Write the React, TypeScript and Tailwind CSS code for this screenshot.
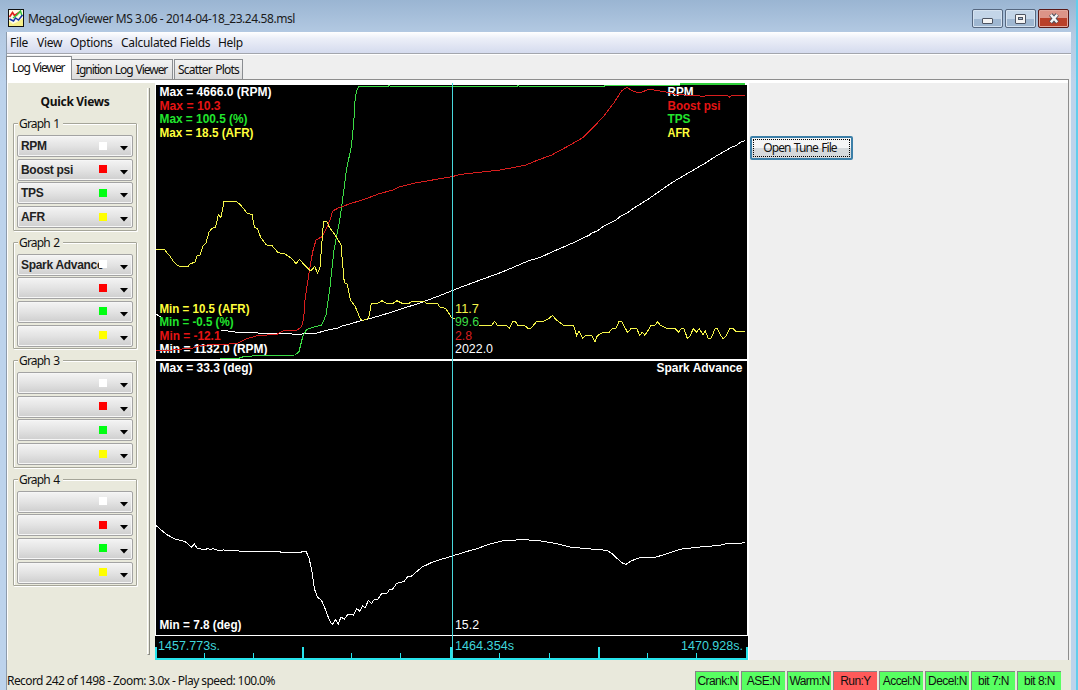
import clsx from 'clsx';

type Point = [number, number];

interface GraphGroup {
  title: string;
  fields: string[];
}

const MENU_ITEMS = [
  { label: 'File', className: 'w-[27px]' },
  { label: 'View', className: 'w-[33px]' },
  { label: 'Options', className: 'w-[51px]' },
  { label: 'Calculated Fields', className: 'w-[97px]' },
  { label: 'Help', className: 'w-[30px]' },
];

const GROUPS: GraphGroup[] = [
  { title: 'Graph 1', fields: ['RPM', 'Boost psi', 'TPS', 'AFR'] },
  { title: 'Graph 2', fields: ['Spark Advance', '', '', ''] },
  { title: 'Graph 3', fields: ['', '', '', ''] },
  { title: 'Graph 4', fields: ['', '', '', ''] },
];

const SWATCHES = ['bg-white', 'bg-[#ff0000]', 'bg-[#00ff12]', 'bg-[#ffff00]'];

const FLAGS = [
  { label: 'Crank:N', on: false },
  { label: 'ASE:N', on: false },
  { label: 'Warm:N', on: false },
  { label: 'Run:Y', on: true },
  { label: 'Accel:N', on: false },
  { label: 'Decel:N', on: false },
  { label: 'bit 7:N', on: false },
  { label: 'bit 8:N', on: false },
];

// Traces, in window coordinates (same space as the svg viewBox)
const RPM_HEAD: Point[] = [[156, 314], [159, 316], [161, 317]];

const RPM: Point[] = [
  [221, 330], [235, 332], [250, 332.7], [277, 333.7], [290, 333.7], [298, 334.7],
  [302, 334], [317, 333], [326, 330.5], [337, 328.3], [342, 326], [348, 324.5], [360, 321], [372, 318], [390, 312.7], [404, 308],
  [417, 304], [437, 296.7], [452, 290.7], [460, 287.5], [483, 279], [497, 274], [507, 270], [528, 261], [540, 257.5], [552, 252],
  [572, 243.3], [589, 235.3], [591, 233.5], [597, 231], [604, 226], [616, 220], [620, 216.7], [627, 213], [634, 208], [648, 199.3],
  [662, 189.5], [673, 182], [684, 175.5], [705, 163.3], [717, 155.5], [727, 150], [731, 147.5], [736, 145.5], [741, 142], [745, 140.5],
];

const BOOST: Point[] = [
  [156, 350.5], [172, 350], [193, 348], [200, 345.7], [210, 344.7], [237, 343.7], [245, 339.3], [257, 335.7], [277, 334.3], [283, 331],
  [297, 330], [301.7, 326.7], [303.7, 318.3], [305, 300], [309.7, 268.3], [312.7, 251.7], [316, 240], [322, 236.7], [327, 227], [330, 220],
  [332.7, 211], [338.3, 208], [350, 203.7], [365.3, 199], [378.3, 194], [392.7, 190], [400, 186.7], [416.7, 182.7], [436.7, 179.3], [452, 176.7],
  [460, 174.5], [473.3, 173], [500, 170], [525, 165.3], [538, 160], [551.7, 155], [568.3, 146], [582.7, 137.7], [593.3, 127.3], [603.3, 116.7],
  [614, 102.7], [621.7, 90.7], [626.7, 87.3], [633, 91], [639, 93], [649.3, 89.3], [666, 92], [676.7, 94.7], [699, 95.5], [702.7, 97],
  [706, 95.5], [727, 95.5], [729.5, 97], [732, 95.5], [745, 95.5],
];

const TPS: Point[] = [
  [220, 358.5], [237, 358.5], [245, 356.3], [270, 355.3], [295, 355], [299, 351.7], [302.7, 336.7], [306.7, 329.3], [314, 327], [321.7, 325],
  [326, 315], [330, 286.7], [334, 250], [339.7, 220], [341.7, 206], [346.7, 168.3], [351.3, 146.7], [353.7, 123.3], [355.3, 96.7], [357, 90],
  [359, 86.5], [388, 86.5], [389, 85.5], [391, 86.5], [517, 86.5], [518, 85.5], [520, 86.5], [604, 86.5], [605, 85.5], [680, 85.5],
];

const AFR: Point[] = [
  [156, 249.5], [164.5, 249.5], [167, 253], [170, 256], [173, 261], [177, 265], [180, 266.5], [188, 266.5], [190, 264], [195, 262],
  [197, 256], [200, 255], [203, 246], [206, 243], [209, 232], [211.7, 228.5], [215.7, 227], [218.3, 214.5], [221, 217.5], [224, 201.5],
  [236.5, 201.5], [240.5, 205], [247.5, 213.5], [252, 214.5], [254.5, 227], [257.5, 229], [260.7, 237.3], [266.5, 245], [272, 245.5], [278, 252.7],
  [284.5, 253.5], [291.5, 258.5], [296, 263.5], [299.5, 259.5], [305, 265.5], [309.5, 270], [311.5, 270], [314.7, 266.5], [317.5, 273], [320, 267.5],
  [323.5, 221.5], [326.7, 221.5], [329.5, 227.5], [335.5, 235.5], [341, 245], [344.3, 282.7], [347.3, 284], [350.3, 300], [355, 306], [360.5, 319.3],
  [363, 320.5], [368.5, 318.5], [371.3, 304], [378, 303], [382, 300.7], [385.7, 303], [393.5, 303], [397, 300.7], [401.5, 303], [409.5, 303],
  [412.7, 301], [423.5, 301], [426.5, 303.3], [437.5, 303.3], [440, 307.3], [445.5, 308.3], [451.7, 317.7], [454.5, 318.7],
];

const AFR_TAIL: Point[] = [
  [479, 325.5], [491.7, 325.5], [494.7, 321.3], [497.5, 325.5], [506.7, 325.5], [509.3, 328.5], [512.7, 321.5], [515.3, 321.5], [518, 325.5], [524.7, 325.5],
  [528, 328.5], [530.7, 328.5], [536.7, 321.5], [544, 321], [549.3, 318.3], [552.3, 315.5], [557.3, 320.7], [564, 325.5], [573.7, 325.7], [576.7, 335.7],
  [579, 331], [582.7, 338.3], [585.7, 335.3], [591.7, 335.3], [595, 342], [597.3, 335.7], [603.3, 332], [609.3, 332], [612, 329], [616, 328.3],
  [619, 321.5], [621.7, 321.7], [627.7, 332.7], [631, 328.5], [636.7, 328.5], [639.7, 335.3], [642.3, 332.3], [645, 335.3], [651, 325.5], [655, 325],
  [657.7, 321.7], [660, 325], [667, 328.5], [675.3, 328.5], [678.3, 332.3], [681.3, 328.5], [684, 328.7], [687.3, 338.3], [690.3, 335.7], [693.3, 328.5],
  [696.3, 332.3], [699.3, 328.5], [703, 335], [705.3, 331], [708.3, 338.3], [711.3, 338], [715, 328.7], [717.3, 328.5], [720.3, 335], [723.3, 338.7],
  [726.7, 335], [729.3, 329], [733.3, 328.5], [736, 331.7], [745, 331.7],
];

const SPARK: Point[] = [
  [156, 525.5], [160, 529], [167, 534.7], [175, 539], [185, 541.5], [191.7, 547.3], [194.3, 544], [197.3, 548.5], [205, 549.5], [208, 548.5],
  [210, 549.7], [213.3, 548.7], [219, 550.7], [223.3, 550], [243.3, 551.3], [280, 551.7], [281, 552.5], [301, 552.5], [302, 551.5], [306, 551.5],
  [309, 557.7], [312.3, 573.3], [314.3, 588.3], [317.3, 597.3], [321.3, 600], [324.3, 606.7], [329.3, 620], [332.3, 624.7], [335.7, 619.3], [338.3, 624],
  [341, 617], [344.3, 619.3], [348, 614], [353.3, 615], [356.7, 608.7], [360, 611.3], [362.7, 606], [365, 608], [368.3, 600.7], [371.7, 603.3],
  [374.3, 599.3], [378, 599.3], [381.7, 593.3], [387.3, 593], [389.3, 589.3], [392.7, 589], [396.7, 583.3], [404.3, 581.3], [407.7, 576.7], [411.7, 576],
  [421.7, 567.3], [433.3, 561.7], [450, 556.7], [465, 552], [476.7, 548.7], [490, 544], [501.7, 541], [520, 539.7], [536.7, 540.3], [556.7, 543.7],
  [570, 547], [586.7, 548.7], [606.7, 550.3], [611.7, 553.3], [621.7, 562.7], [626, 564.3], [631.7, 560.7], [640, 557.5], [653.3, 558], [670, 552.7],
  [680, 549.3], [696.7, 547.3], [720, 545.3], [726.7, 543.7], [738.3, 543.7], [745, 542.3],
];

function Trace({ points, color }: { points: Point[]; color: string }) {
  return (
    <polyline
      points={points.map((p) => p.join(',')).join(' ')}
      fill="none"
      stroke={color}
      strokeWidth={1}
      shapeRendering="crispEdges"
    />
  );
}

interface LabelProps {
  x: number;
  y: number;
  width: number;
  color: string;
  bold?: boolean;
  children: string;
}

function Label({ x, y, width, color, bold = false, children }: LabelProps) {
  return (
    <text
      x={x}
      y={y}
      fill={color}
      textLength={width}
      lengthAdjust="spacingAndGlyphs"
      className={clsx("font-['Liberation_Sans',sans-serif] text-[12px]", bold && 'font-bold')}
    >
      {children}
    </text>
  );
}

function LogChart() {
  return (
    <svg className="block h-[577px] w-[593px] shrink-0" viewBox="155 83 593 577">
      <rect x={155} y={85} width={593} height={575} fill="#000" />

      {/* Frame and dividers */}
      <g fill="#fff">
        <rect x={155} y={83} width={593} height={2} />
        <rect x={155} y={85} width={1} height={551} />
        <rect x={747} y={85} width={1} height={551} />
        <rect x={155} y={359} width={593} height={2} />
        <rect x={155} y={635} width={593} height={1} />
      </g>

      {/* Graph 1 labels */}
      <Label x={159.5} y={96} width={112} color="#fff" bold>Max = 4666.0 (RPM)</Label>
      <Label x={159.5} y={110} width={61} color="#e61414" bold>Max = 10.3</Label>
      <Label x={159.5} y={123} width={88} color="#22e62e" bold>Max = 100.5 (%)</Label>
      <Label x={159.5} y={137} width={94} color="#ffff3c" bold>Max = 18.5 (AFR)</Label>
      <Label x={667.5} y={96} width={26} color="#fff" bold>RPM</Label>
      <Label x={667.5} y={110} width={53} color="#e61414" bold>Boost psi</Label>
      <Label x={667.5} y={123} width={23} color="#22e62e" bold>TPS</Label>
      <Label x={667.5} y={137} width={22.5} color="#ffff3c" bold>AFR</Label>
      <Label x={159.5} y={313} width={90} color="#ffff3c" bold>Min = 10.5 (AFR)</Label>
      <Label x={159.5} y={326} width={74} color="#22e62e" bold>Min = -0.5 (%)</Label>
      <Label x={159.5} y={340} width={61} color="#e61414" bold>Min = -12.1</Label>
      <Label x={159.5} y={353} width={108} color="#fff" bold>Min = 1132.0 (RPM)</Label>

      {/* Graph 2 labels */}
      <Label x={159.5} y={372} width={93} color="#fff" bold>Max = 33.3 (deg)</Label>
      <Label x={656.5} y={372} width={86} color="#fff" bold>Spark Advance</Label>
      <Label x={159.5} y={629} width={82} color="#fff" bold>Min = 7.8 (deg)</Label>

      <Trace points={RPM_HEAD} color="#fff" />
      <Trace points={RPM} color="#fff" />
      <Trace points={TPS} color="#3bdc45" />
      <rect x={220} y={358} width={20} height={1} fill="#3bdc45" />
      <rect x={680} y={83} width={65} height={2} fill="#2fd03a" />
      <Trace points={BOOST} color="#d81e1e" />
      <Trace points={AFR} color="#f5f54a" />
      <Trace points={AFR_TAIL} color="#f5f54a" />
      <Trace points={SPARK} color="#fff" />

      {/* Playback cursor and its readouts */}
      <rect x={452} y={83} width={1} height={576} fill="#48d8dc" />
      <Label x={455} y={313} width={24} color="#f5f54a">11.7</Label>
      <Label x={455} y={326} width={24} color="#3bdc45">99.6</Label>
      <Label x={455} y={340} width={17} color="#d81e1e">2.8</Label>
      <Label x={455} y={353} width={38} color="#fff">2022.0</Label>
      <Label x={455} y={629} width={24} color="#fff">15.2</Label>

      {/* Time axis */}
      <g fill="#28e4ec">
        <rect x={155} y={658} width={593} height={2} />
        {[155, 302, 450, 598, 746].map((x) => (
          <rect key={x} x={x} y={647} width={2} height={11} />
        ))}
        {[204, 253, 351, 400, 499, 549, 647, 696].map((x) => (
          <rect key={x} x={x} y={653} width={1} height={5} />
        ))}
      </g>
      <Label x={158} y={650} width={62} color="#3fd6dc">1457.773s.</Label>
      <Label x={455} y={650} width={59} color="#3fd6dc">1464.354s</Label>
      <Label x={681} y={650} width={62} color="#3fd6dc">1470.928s.</Label>
    </svg>
  );
}

function FieldSelect({ value, swatch }: { value: string; swatch: string }) {
  return (
    <div className="relative flex h-[22px] items-center rounded-[2px] border border-[#a3a3a3] bg-linear-to-b from-[#f4f4f4] from-0% via-[#e3e3e3] via-50% to-[#cecece] px-[3px] shadow-[inset_0_0_0_1px_#f6f6f6]">
      <span className="whitespace-nowrap font-['Liberation_Sans',sans-serif] text-[12px] font-bold leading-[20px] tracking-[-0.3px] text-[#222]">
        {value}
      </span>
      <span className={clsx('absolute left-[81px] top-[5.5px] size-[8px]', swatch)} />
      <svg className="absolute left-[102px] top-[10px]" width="8" height="5" viewBox="0 0 8 5">
        <path d="M0 0h8L4 4.5z" fill="#000" />
      </svg>
    </div>
  );
}

function GroupBox({ group }: { group: GraphGroup }) {
  return (
    <fieldset className="relative h-[107.5px] rounded-[1px] border border-[#a5a599] px-[3px] pt-[11px] shadow-[inset_1px_1px_0_#fff,1px_1px_0_#fff]">
      <span className="absolute left-1 top-[-8px] bg-[#e9e9dc] pl-px pr-1 text-[12px] leading-[16px] tracking-[-0.8px] [word-spacing:1px]">
        {group.title}
      </span>
      <div className="flex flex-col gap-[1.7px]">
        {group.fields.map((field, i) => (
          <FieldSelect key={i} value={field} swatch={SWATCHES[i]} />
        ))}
      </div>
    </fieldset>
  );
}

function QuickViews() {
  return (
    <aside className="flex w-[147px] shrink-0 bg-[#e9e9dc]">
      <div className="w-[139px] pl-[5px] pr-[10px]">
        <h2 className="pt-[10px] text-center text-[12px] font-bold leading-[17px] tracking-[-0.3px]">Quick Views</h2>
        <div className="mt-[13px] flex flex-col gap-[11px]">
          {GROUPS.map((group) => (
            <GroupBox key={group.title} group={group} />
          ))}
        </div>
      </div>
      <div className="mt-[5px] h-[567px] w-[3px] border-b border-l border-r border-b-[#8d8d85] border-l-white border-r-[#8d8d85]" />
    </aside>
  );
}

function AppIcon() {
  return (
    <svg width="16" height="18" viewBox="0 0 16 18">
      <rect x="0.5" y="0.5" width="15" height="17" fill="#fffce6" stroke="#111" />
      <path d="M1 12l4 3 4-2 6-4v8H1z" fill="#f7f08a" />
      <path d="M1.5 8l3-4.5 2 3 3-2 3-2" fill="none" stroke="#e02020" strokeWidth="1.7" />
      <path d="M5 9l4-3 3.5-4L14 7" fill="none" stroke="#32c83c" strokeWidth="1.4" />
      <path d="M1.5 10l4 2 2-3 3 2 4-5" fill="none" stroke="#1937a8" strokeWidth="1.5" />
    </svg>
  );
}

function TitleBar() {
  return (
    <header className="flex h-[32px] items-start pl-2 pr-[7px]">
      <div className="mt-[9px]">
        <AppIcon />
      </div>
      <h1 className="ml-1 mt-[10px] flex-1 whitespace-nowrap text-[12px] leading-[18px] tracking-[-0.43px] text-[#1b1b1b]">
        MegaLogViewer MS 3.06 - 2014-04-18_23.24.58.msl
      </h1>
      <div className="mt-[9px] flex gap-[2px]">
        <button className="flex h-[19px] w-[31px] items-end justify-center rounded-[2px] border border-[#56677f] bg-linear-to-b from-[#c3d5e8] from-50% to-[#9fb7d1] to-50% pb-[3px] shadow-[inset_0_0_0_1px_#d5e2f0]">
          <span className="h-[6px] w-[11px] rounded-[1px] border border-[#4c5361] bg-[#f4f4f4]" />
        </button>
        <button className="flex h-[19px] w-[31px] items-center justify-center rounded-[2px] border border-[#56677f] bg-linear-to-b from-[#c3d5e8] from-50% to-[#9fb7d1] to-50% shadow-[inset_0_0_0_1px_#d5e2f0]">
          <span className="flex h-[10px] w-[11px] items-center justify-center rounded-[1px] border border-[#4c5361] bg-[#f4f4f4]">
            <span className="h-[3px] w-[5px] border border-[#4c5361] bg-[#a9bdd4]" />
          </span>
        </button>
        <button className="flex h-[19px] w-[31px] items-center justify-center rounded-[2px] border border-[#5a1a18] bg-linear-to-b from-[#dc9488] from-45% to-[#b9402a] to-45% shadow-[inset_0_0_0_1px_#e2a79c]">
          <svg width="12" height="11" viewBox="0 0 12 11">
            <path d="M2.8 1.5l6.4 8M9.2 1.5L2.8 9.5" stroke="#4a4f5c" strokeWidth="4.4" />
            <path d="M2.8 1.8l6.4 7.4M9.2 1.8L2.8 9.2" stroke="#f6f6f6" strokeWidth="2.5" />
          </svg>
        </button>
      </div>
    </header>
  );
}

function TabStrip() {
  return (
    <nav className="-ml-px flex h-[24px] items-end whitespace-nowrap text-[12px]">
      <div className="relative z-10 -mb-px h-[24px] w-[66px] border-l border-r border-t border-[#8a8d91] bg-white pl-[5px] leading-[22px] tracking-[-1.05px] [word-spacing:1px]">
        Log Viewer
      </div>
      <div className="h-[20px] w-[101px] border-r border-t border-[#8a8d91] bg-linear-to-b from-[#f3f3f3] to-[#dcdcdc] pl-1 leading-[20px] tracking-[-1.05px] [word-spacing:1px]">
        Ignition Log Viewer
      </div>
      <div className="ml-px h-[20px] w-[69px] border-l border-r border-t border-[#8a8d91] bg-linear-to-b from-[#f3f3f3] to-[#dcdcdc] pl-[3px] leading-[20px] tracking-[-0.8px] [word-spacing:1px]">
        Scatter Plots
      </div>
    </nav>
  );
}

function StatusBar() {
  return (
    <footer className="flex h-[30px] items-end justify-between bg-[#e9e9dc] pr-[10px]">
      <p className="whitespace-nowrap text-[12px] leading-[19px] tracking-[-0.58px]">
        Record 242 of 1498 - Zoom: 3.0x - Play speed: 100.0%
      </p>
      <div className="flex gap-[2px]">
        {FLAGS.map((flag) => (
          <div
            key={flag.label}
            className={clsx(
              "h-[19px] w-[44px] overflow-hidden whitespace-nowrap border-l border-t border-[#858585] text-center font-['Liberation_Sans',sans-serif] text-[12px] leading-[19px] tracking-[-0.55px]",
              flag.on ? 'bg-[#ff5a5a]' : 'bg-[#58ff62]',
            )}
          >
            {flag.label}
          </div>
        ))}
      </div>
    </footer>
  );
}

export default function App() {
  return (
    <div className="h-[690px] w-[1078px] overflow-hidden bg-[#b9d1ea] bg-linear-to-b from-[#9ab5d2] from-0% via-[#b4cae3] via-[5%] to-[#bdd3ec] to-[12%] font-['Noto_Sans','Open_Sans',sans-serif] text-[#111]">
      <div className="flex h-full flex-col border-r-2 border-[#62cdec]">
        <TitleBar />
        <div className="ml-[6px] mr-[5px] flex min-h-0 flex-1 flex-col border-l border-[#8d9bab] bg-[#efefef]">
          {/* Menu */}
          <div className="flex h-[22px] shrink-0 items-center border-b border-[#a3a6ad] bg-linear-to-b from-white from-0% via-[#eceff8] via-30% to-[#d5dbee] pl-[3px] text-[12px] tracking-[-0.3px]">
            {MENU_ITEMS.map((item) => (
              <span key={item.label} className={clsx('whitespace-nowrap', item.className)}>
                {item.label}
              </span>
            ))}
          </div>
          <div className="h-px shrink-0 bg-white" />
          <TabStrip />
          <div className="mr-[2px] flex h-[581px] flex-col border-r border-t border-[#8d8d8d] bg-[#efefef]">
            <div className="h-[3px] shrink-0 bg-white" />
            <div className="flex border-l border-white">
              <QuickViews />
              <LogChart />
              <section className="flex flex-1 items-start border-l border-white pl-px pt-[53px]">
                <button className="h-[24px] w-[103px] rounded-[2px] border-2 border-[#3c7fa8] bg-linear-to-b from-[#f4f5f6] from-50% to-[#d5d9dc] to-50% p-px">
                  <span className="block h-full border border-dotted border-black pr-[3px] text-center text-[12px] leading-[16px] tracking-[-0.9px] [word-spacing:1px]">
                    Open Tune File
                  </span>
                </button>
              </section>
            </div>
          </div>
          <StatusBar />
        </div>
      </div>
    </div>
  );
}
